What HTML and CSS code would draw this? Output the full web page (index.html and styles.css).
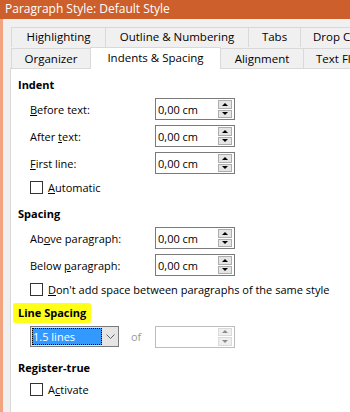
FILE: index.html
```html
<!DOCTYPE html>
<html lang="en">
<head>
  <meta charset="UTF-8" />
  <title>Paragraph Style: Default Style</title>
  <link rel="stylesheet" href="styles.css">
</head>
<body>
  <div class="window">
    <div class="titlebar">Paragraph Style: Default Style</div>

    <div class="frame">
      <div class="tabs">
        <div class="tab-row">
          <div class="tab w-highlight">Highlighting</div>
          <div class="tab w-outline">Outline &amp; Numbering</div>
          <div class="tab w-tabs">Tabs</div>
          <div class="tab w-drop">Drop Caps</div>
        </div>
        <div class="tab-row">
          <div class="tab w-organizer">Organizer</div>
          <div class="tab w-indents active">Indents &amp; Spacing</div>
          <div class="tab w-align">Alignment</div>
          <div class="tab w-flow">Text Flow</div>
        </div>
      </div>

      <div class="panel">
        <div class="section-title">Indent</div>
        <div class="field">
          <span class="label"><u>B</u>efore text:</span>
          <div class="spin"><span class="value">0,00 cm</span><span class="spin-btns"><i class="up"></i><i class="down"></i></span></div>
        </div>
        <div class="field">
          <span class="label">After <u>t</u>ext:</span>
          <div class="spin"><span class="value">0,00 cm</span><span class="spin-btns"><i class="up"></i><i class="down"></i></span></div>
        </div>
        <div class="field">
          <span class="label"><u>F</u>irst line:</span>
          <div class="spin"><span class="value">0,00 cm</span><span class="spin-btns"><i class="up"></i><i class="down"></i></span></div>
        </div>
        <label class="check"><span class="box"></span><span><u>A</u>utomatic</span></label>

        <div class="section-title spaced">Spacing</div>
        <div class="field">
          <span class="label">Ab<u>o</u>ve paragraph:</span>
          <div class="spin"><span class="value">0,00 cm</span><span class="spin-btns"><i class="up"></i><i class="down"></i></span></div>
        </div>
        <div class="field">
          <span class="label">Below <u>p</u>aragraph:</span>
          <div class="spin"><span class="value">0,00 cm</span><span class="spin-btns"><i class="up"></i><i class="down"></i></span></div>
        </div>
        <label class="check"><span class="box"></span><span><u>D</u>on't add space between paragraphs of the same style</span></label>

        <div class="section-title marked"><span class="marker">Line Spacing</span></div>
        <div class="field line-field">
          <div class="combo">
            <span class="combo-value">1.5 lines</span>
            <span class="combo-btn">
              <svg width="9" height="6" viewBox="0 0 9 6"><path d="M0.5 0.5 L4.5 4.5 L8.5 0.5" fill="none" stroke="#606060" stroke-width="1"/></svg>
            </span>
          </div>
          <span class="of">of</span>
          <div class="spin disabled"><span class="value"></span><span class="spin-btns"><i class="up"></i><i class="down"></i></span></div>
        </div>

        <div class="section-title spaced">Register-true</div>
        <label class="check"><span class="box"></span><span>A<u>c</u>tivate</span></label>
      </div>
    </div>
  </div>
</body>
</html>
```

FILE: styles.css
```css
:root {
  --accent: #cc5f2b;
  --accent-light: #f2a47e;
  --face: #f0f0f0;
  --tab-border: #d9d9d9;
  --field-border: #7a7a7a;
  --btn-border: #adadad;
}

* {
  box-sizing: border-box;
  margin: 0;
  padding: 0;
}

body {
  font-family: 'Open Sans', 'Noto Sans', sans-serif;
  font-size: 11px;
  color: #000;
  width: 350px;
  height: 412px;
  overflow: hidden;
}

.window {
  display: flex;
  flex-direction: column;
  height: 412px;
  background-color: var(--accent);
}

.titlebar {
  height: 19px;
  line-height: 17px;
  padding-left: 5px;
  color: #fff;
  font-size: 12px;
  white-space: nowrap;
}

.frame {
  flex: 1;
  display: flex;
  flex-direction: column;
  background-color: var(--face);
  border-left: 3px solid var(--accent-light);
  padding: 8px 0 0 7px;
  overflow: hidden;
}

/* tabs */
.tabs {
  display: flex;
  flex-direction: column;
  padding-left: 1px;
}

.tab-row {
  display: flex;
  white-space: nowrap;
}

.tab {
  flex: none;
  height: 20px;
  line-height: 18px;
  font-size: 11.5px;
  text-align: center;
  border: 1px solid var(--tab-border);
  border-bottom: none;
  margin-right: -1px;
  background-color: var(--face);
}

.tab-row + .tab-row {
  align-items: flex-end;
  height: 21px;
}

.tab-row + .tab-row .tab {
  height: 20px;
  line-height: 19px;
}

.tab.active {
  height: 22px !important;
  line-height: 19px !important;
  background-color: #fff;
  position: relative;
  z-index: 1;
  margin-bottom: -1px;
}

.w-highlight { width: 95px; }
.w-outline { width: 144px; }
.w-tabs { width: 53px; }
.w-drop { width: 90px; text-align: left; padding-left: 12px; }
.w-organizer { width: 80px; }
.w-indents { width: 131px; }
.w-align { width: 84px; }
.w-flow { width: 90px; text-align: left; padding-left: 12px; }

/* page */
.panel {
  flex: 1;
  background-color: #fff;
  border-top: 1px solid var(--tab-border);
  border-left: 1px solid var(--tab-border);
  padding: 8px 0 0 7px;
}

.section-title {
  font-weight: 700;
  height: 16px;
  line-height: 16px;
  margin-bottom: 5px;
}

.section-title.spaced {
  margin-top: 11px;
}

.section-title.marked {
  margin-top: 8px;
}

.marker {
  display: inline-block;
  background-color: #ffff1a;
  padding: 2px 5px;
  margin: -2px 0 -2px -5px;
  line-height: 16px;
  border-radius: 2px;
}

.field {
  display: flex;
  align-items: center;
  padding-left: 12px;
  height: 22px;
  margin-bottom: 5px;
}

.label {
  width: 125px;
}

.spin {
  display: flex;
  align-items: center;
  width: 80px;
  height: 22px;
  border: 1px solid var(--field-border);
  background-color: #fff;
  padding: 1px 2px 1px 2px;
}

.spin .value {
  flex: 1;
}

.spin-btns {
  display: flex;
  flex-direction: column;
  gap: 1px;
  width: 14px;
  height: 18px;
}

.spin-btns i {
  flex: 1;
  display: flex;
  align-items: center;
  justify-content: center;
  background-color: #e5e5e5;
  border: 1px solid var(--btn-border);
}

.spin-btns i::after {
  content: "";
  border-left: 3px solid transparent;
  border-right: 3px solid transparent;
}

.spin-btns .up::after {
  border-bottom: 3px solid #000;
}

.spin-btns .down::after {
  border-top: 3px solid #000;
}

.spin.disabled {
  border-color: #bcbcbc;
}

.spin.disabled .spin-btns i {
  background-color: #efefef;
  border-color: #dadada;
}

.spin.disabled .spin-btns .up::after {
  border-bottom-color: #8c8c8c;
}

.spin.disabled .spin-btns .down::after {
  border-top-color: #8c8c8c;
}

.check {
  display: flex;
  align-items: center;
  gap: 5px;
  padding-left: 12px;
  height: 16px;
  white-space: nowrap;
}

.check .box {
  width: 13px;
  height: 13px;
  border: 1px solid #333;
  background-color: #fff;
}

/* line spacing */
.line-field {
  height: 21px;
  margin-top: 3px;
  margin-bottom: 13px;
}

.combo {
  display: flex;
  width: 89px;
  height: 21px;
  border: 1px solid var(--field-border);
  background-color: #e5e5e5;
}

.combo-value {
  flex: 1;
  background-color: #3399ff;
  color: #fff;
  line-height: 17px;
  padding-left: 1px;
  outline: 1px dotted #000;
  outline-offset: -1px;
  margin: 1px 0 1px 1px;
}

.combo-btn {
  width: 16px;
  display: flex;
  align-items: center;
  justify-content: center;
}

.of {
  color: #9a9a9a;
  width: 36px;
  padding-left: 12px;
}
```
